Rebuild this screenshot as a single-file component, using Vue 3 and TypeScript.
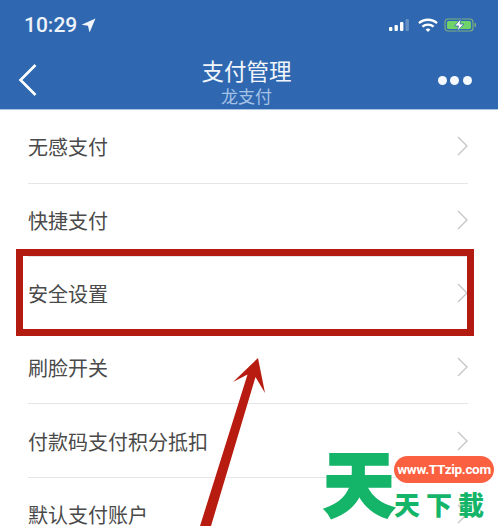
<template>
  <div class="phone">
    <header class="header">
      <div class="status">
        <div class="status__left">
          <span class="status__time">10:29</span>
          <svg class="status__loc" width="15" height="15" viewBox="0 0 14 14"><path d="M13.500.5 .5 6.400l6 .9L8 13.500z" fill="#f2f6fb" /></svg>
        </div>
        <div class="status__right">
          <svg width="24" height="14" viewBox="0 0 24 14">
            <rect x="1" y="9" width="3.400" height="4" rx="1" fill="#fff" />
            <rect x="6.500" y="7" width="3.400" height="6" rx="1" fill="#fff" />
            <rect x="12" y="4" width="3.400" height="9" rx="1" fill="#fff" />
            <rect x="17.500" y="1" width="3.400" height="12" rx="1" fill="#fff" opacity="0.250" />
          </svg>
          <svg width="22" height="16" viewBox="0 0 22 16" fill="none" stroke="#fff" stroke-width="2.400">
            <path d="M2 6.200c5-4.600 13-4.600 18 0" />
            <path d="M5.400 9.600c3-2.700 8.200-2.700 11.200 0" />
            <path d="M11 15 8.600 12.400c1.400-1.100 3.400-1.100 4.800 0z" fill="#fff" stroke="none" />
          </svg>
          <svg width="34" height="16" viewBox="0 0 34 16">
            <rect x="1" y="2" width="28" height="12" rx="3" fill="none" stroke="#7fae7f" stroke-width="1.200" />
            <rect x="3" y="4" width="24" height="8" rx="1.500" fill="#6fd36a" />
            <rect x="30.500" y="6" width="1.500" height="4" rx="0.700" fill="#7fae7f" />
            <path d="M17 1.500 10.500 9h4l-1.500 5.500L20 7h-4z" fill="#fff" stroke="#2f68b0" stroke-width="0.800" />
          </svg>
        </div>
      </div>
      <div class="nav">
        <svg class="nav__back" width="20" height="34" viewBox="0 0 20 34" fill="none" stroke="#fff" stroke-width="2.600">
          <path d="M17.500 2 2.500 17l15 15" />
        </svg>
        <div class="nav__titles">
          <div class="nav__title">支付管理</div>
          <div class="nav__sub">龙支付</div>
        </div>
        <div class="nav__more"><i></i><i></i><i></i></div>
      </div>
    </header>

    <ul class="list">
      <li v-for="item in items" :key="item" class="list__row">
        <span class="list__label">{{ item }}</span>
        <svg class="list__chev" width="11" height="20" viewBox="0 0 11 20" fill="none" stroke="#c4c4c6" stroke-width="1.300">
          <path d="m1 1 9 9-9 9" />
        </svg>
      </li>
    </ul>

    <div class="mark"></div>
    <svg class="arrow" width="90" height="176" viewBox="0 0 90 176">
      <path d="M59 8 34 32l14.500-7.500L1 176h11L56.500 27 66 43z" fill="#b81c10" />
    </svg>

    <div class="logo">
      <span class="logo__big">天</span>
      <span class="logo__url">www.TTzip.com</span>
      <span class="logo__name">天下載</span>
    </div>
  </div>
</template>

<script setup lang="ts">
const items: string[] = ["无感支付", "快捷支付", "安全设置", "刷脸开关", "付款码支付积分抵扣", "默认支付账户"];
</script>

<style>
html,
body {
  margin: 0;
  background: #fff;
}
</style>

<style scoped>
.phone {
  position: relative;
  width: 498px;
  height: 526px;
  overflow: hidden;
  background: #fff;
  font-family: "Noto Sans CJK SC", "Liberation Sans", sans-serif;
}

.header {
  height: 110px;
  background: #2f68b0;
  border-bottom: 1px solid #a9c6e4;
  box-sizing: border-box;
  color: #fff;
}

.status {
  height: 50px;
  padding: 0 24px;
  display: flex;
  align-items: center;
  justify-content: space-between;
}

.status__left {
  display: flex;
  align-items: center;
  gap: 4px;
}

.status__time {
  font-family: "Roboto", "Liberation Sans", sans-serif;
  font-size: 21px;
  font-weight: 500;
  color: #eef3f9;
}

.status__right {
  display: flex;
  align-items: center;
  gap: 5px;
  margin-right: -4px;
}

.nav {
  height: 59px;
  padding: 0 26px 0 18px;
  display: flex;
  align-items: flex-start;
  justify-content: space-between;
}

.nav__back {
  margin-top: 13px;
}

.nav__titles {
  text-align: center;
  margin-top: 6px;
  margin-left: 17px;
}

.nav__title {
  font-size: 22.500px;
  line-height: 28px;
  color: #f2f6fb;
}

.nav__sub {
  font-size: 17px;
  line-height: 20px;
  margin-top: 2px;
  color: #a5c3e6;
}

.nav__more {
  display: flex;
  gap: 3.500px;
  margin-top: 26px;
}

.nav__more i {
  width: 9px;
  height: 9px;
  border-radius: 50%;
  background: #f5f8fc;
}

.list {
  list-style: none;
  margin: 0;
  padding: 0 30px 0 28px;
}

.list__row {
  height: 73.600px;
  box-sizing: border-box;
  display: flex;
  align-items: center;
  justify-content: space-between;
  border-bottom: 1px solid #e6e6e8;
}

.list__label {
  font-size: 20px;
  line-height: 20px;
  padding-top: 2px;
  color: #4a4a4a;
}

.mark {
  position: absolute;
  left: 16px;
  top: 249px;
  width: 458px;
  height: 87px;
  box-sizing: border-box;
  border: 7px solid #b31b10;
}

.arrow {
  position: absolute;
  left: 199px;
  top: 350px;
}

.logo {
  position: absolute;
  left: 320px;
  top: 445px;
  width: 178px;
  height: 81px;
  color: #14b469;
}

.logo__big {
  position: absolute;
  left: 3px;
  top: 0;
  font-size: 72px;
  line-height: 70px;
  font-weight: 900;
  -webkit-text-stroke: 2px #14b469;
}

.logo__url {
  position: absolute;
  left: 74px;
  top: 11px;
  width: 100px;
  height: 27px;
  border-radius: 14px;
  background: #fb6140;
  color: #fff;
  font-family: "Roboto", "Liberation Sans", sans-serif;
  font-size: 13.500px;
  font-weight: 700;
  line-height: 27px;
  letter-spacing: -0.300px;
  text-align: center;
}

.logo__name {
  position: absolute;
  left: 74px;
  top: 42px;
  font-size: 26px;
  line-height: 34px;
  font-weight: 900;
  letter-spacing: 6px;
  white-space: nowrap;
}
</style>
